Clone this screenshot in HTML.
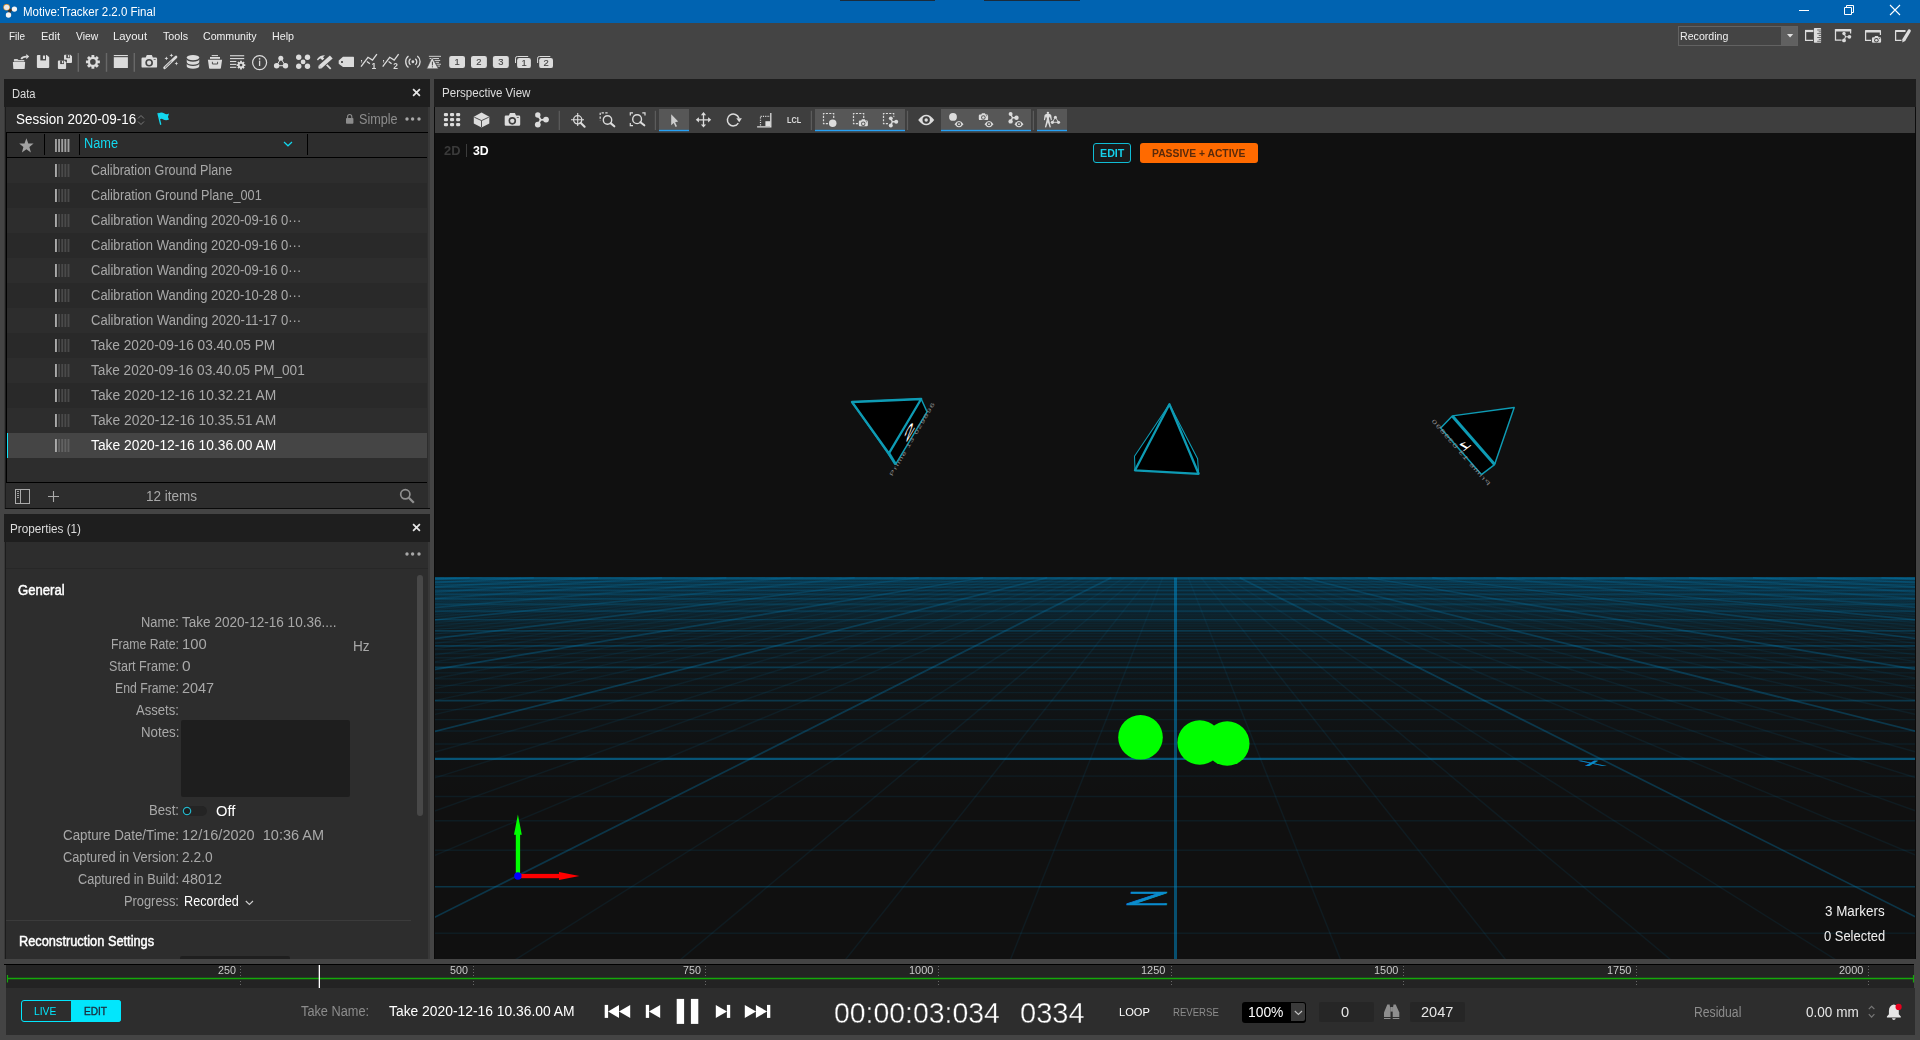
<!DOCTYPE html>
<html><head><meta charset="utf-8"><title>Motive:Tracker 2.2.0 Final</title>
<style>
html,body{margin:0;padding:0;}
body{width:1920px;height:1040px;position:relative;overflow:hidden;background:#444444;font-family:"Liberation Sans", sans-serif;}
svg{position:absolute;overflow:visible;}
.i{fill:#dcdcdc;}
</style></head><body>
<div style="position:absolute;left:0px;top:0px;width:1920px;height:23px;background:#0063b1;"></div>
<div style="position:absolute;left:840px;top:0px;width:95px;height:1px;background:#1b2b3b;"></div>
<div style="position:absolute;left:984px;top:0px;width:96px;height:1px;background:#1b2b3b;"></div>
<div style="position:absolute;left:1678px;top:26px;width:120px;height:20px;background:#444444;box-sizing:border-box;border:1px solid #626262;"></div>
<div style="position:absolute;left:1781px;top:27px;width:16px;height:18px;background:#606060;"></div>
<svg style="left:1786.5px;top:34.3px" width="6.2" height="3.4"><path d="M0 0H6.2L3.1 3.4Z" fill="#e0e0e0"/></svg>
<svg style="left:0;top:0" width="1920" height="48" font-family="Liberation Sans, sans-serif">
<path d="M6.5 7.3L9.9 10.6L14.4 9.1M9.9 10.6L8.5 15" stroke="#333333" stroke-width="2.6" fill="none"/><circle cx="6.6" cy="7.2" r="3.3" fill="#e8962e"/><circle cx="6.7" cy="7.35" r="2.7" fill="#ececec"/><circle cx="14.4" cy="9.1" r="2.7" fill="#f4f4f4"/><circle cx="8.5" cy="15" r="2.7" fill="#f4f4f4"/><rect x="1799" y="10" width="10" height="1" fill="#fff"/><path d="M1844.5 7.5H1851.5V14.5H1844.5ZM1846.5 7.5V5.5H1853.5V12.5H1851.5" fill="none" stroke="#fff" stroke-width="1"/><path d="M1890 5L1900 15M1900 5L1890 15" stroke="#fff" stroke-width="1.1"/><path d="M1813 40.3H1805.6V31" fill="none" stroke="#dcdcdc" stroke-width="1.25"/><rect x="1805" y="29.9" width="8.4" height="2.2" fill="#dcdcdc"/><rect x="1813.9" y="28.1" width="7.2" height="14.7" rx="0.7" fill="#dcdcdc"/><rect x="1817.1999999999998" y="29.60" width="3.9" height="0.75" fill="#444444"/><rect x="1818.6999999999998" y="31.47" width="2.4" height="0.75" fill="#444444"/><rect x="1817.1999999999998" y="33.34" width="3.9" height="0.75" fill="#444444"/><rect x="1818.6999999999998" y="35.21" width="2.4" height="0.75" fill="#444444"/><rect x="1817.1999999999998" y="37.08" width="3.9" height="0.75" fill="#444444"/><rect x="1818.6999999999998" y="38.95" width="2.4" height="0.75" fill="#444444"/><rect x="1817.1999999999998" y="40.82" width="3.9" height="0.75" fill="#444444"/><path d="M1841.6 40H1835.5V30.5M1850.6 30.5V33.4" fill="none" stroke="#dcdcdc" stroke-width="1.25"/><rect x="1834.9" y="29" width="16.35" height="2.4" rx="0.6" fill="#dcdcdc"/><path d="M1844 33.4L1845.6 36.8L1849.4 36.8M1845.6 36.8L1844 40.4" stroke="#dcdcdc" stroke-width="1.1" fill="none"/><circle cx="1844" cy="33.5" r="1.7" fill="#dcdcdc"/><circle cx="1849.4" cy="36.8" r="1.9" fill="#dcdcdc"/><circle cx="1844" cy="40.4" r="1.9" fill="#dcdcdc"/><path d="M1871 40.3H1865.6V31M1880.4 31V35" fill="none" stroke="#dcdcdc" stroke-width="1.25"/><rect x="1865" y="29.9" width="16" height="2.5" rx="0.6" fill="#dcdcdc"/><rect x="1871.1" y="35.1" width="10.8" height="8.4" fill="#444444"/><path d="M1873.1000000000001 37.28H1874.384L1875.028 35.9H1877.972L1878.616 37.28H1879.9Q1881.1000000000001 37.28 1881.1000000000001 38.480000000000004V41.599999999999994Q1881.1000000000001 42.8 1879.9 42.8H1873.1000000000001Q1871.9 42.8 1871.9 41.599999999999994V38.480000000000004Q1871.9 37.28 1873.1000000000001 37.28Z" fill="#dcdcdc"/><circle cx="1876.4080000000001" cy="40.24" r="2.254" fill="#444444"/><circle cx="1876.4080000000001" cy="40.24" r="1.288" fill="#dcdcdc"/><rect x="1879.076" y="38.108000000000004" width="1.196" height="0.7" fill="#444444"/><path d="M1901.5 40.3H1895.6V31" fill="none" stroke="#dcdcdc" stroke-width="1.25"/><rect x="1895" y="29.9" width="10.6" height="2.2" rx="0.6" fill="#dcdcdc"/><path d="M1903.7 40.2L1909.4 30.8" stroke="#444444" stroke-width="5.2"/><path d="M1904 39.6L1909.2 31" stroke="#dcdcdc" stroke-width="3.3" stroke-linecap="round"/><path d="M1902.3 42.4L1902.6 38.8L1905.5 40.5Z" fill="#dcdcdc"/></svg>
<svg style="left:0;top:0;filter:brightness(1)" width="600" height="80" font-family="Liberation Sans, sans-serif">
<rect x="77.6" y="53" width="1.4" height="18.8" fill="#686868"/><rect x="105.8" y="53" width="1.4" height="18.8" fill="#686868"/><rect x="133.60000000000002" y="53" width="1.4" height="18.8" fill="#686868"/><path d="M13.9 61.6V59.6Q13.9 58.9 14.6 58.9H17.4L18.6 59.9H23.8Q24.4 59.9 24.4 60.5V61.6Z" fill="#d0d0d0"/><path d="M12.9 62.1H25.1L24.7 68.4Q24.6 69 24 69H14Q13.4 69 13.3 68.4Z" fill="#dcdcdc"/><path d="M21.2 59Q22.6 56.5 26.8 56.6" fill="none" stroke="#dcdcdc" stroke-width="1.7"/><path d="M26.3 53.9L29.2 56.6L26.3 59.2Z" fill="#dcdcdc"/><path d="M37.9 54.9H46.74L49.2 57.36V67.0Q49.2 68.0 48.2 68.0H37.9Q36.9 68.0 36.9 67.0V55.9Q36.9 54.9 37.9 54.9Z" fill="#dcdcdc"/><rect x="40.34" y="54.80" width="5.66" height="5.63" fill="#444444"/><rect x="42.93" y="55.55" width="2.09" height="3.54" fill="#dcdcdc"/><path d="M65 54.7H70.4L72 56.300000000000004V61.900000000000006Q72 62.900000000000006 71 62.900000000000006H65Q64 62.900000000000006 64 61.900000000000006V55.7Q64 54.7 65 54.7Z" fill="#dcdcdc"/><rect x="66.24" y="54.60" width="3.68" height="3.53" fill="#444444"/><rect x="67.92" y="55.11" width="1.36" height="2.21" fill="#dcdcdc"/><rect x="57.1" y="59.7" width="9.8" height="9.8" fill="#444444"/><path d="M58.9 60.5H64.46L66.1 62.14V68.0Q66.1 69.0 65.1 69.0H58.9Q57.9 69.0 57.9 68.0V61.5Q57.9 60.5 58.9 60.5Z" fill="#dcdcdc"/><rect x="60.20" y="60.40" width="3.77" height="3.65" fill="#444444"/><rect x="61.92" y="60.92" width="1.39" height="2.29" fill="#dcdcdc"/><path d="M99.86 60.51 L99.86 63.29 L97.79 63.36 L97.39 64.32 L98.80 65.84 L96.84 67.80 L95.32 66.39 L94.36 66.79 L94.29 68.86 L91.51 68.86 L91.44 66.79 L90.48 66.39 L88.96 67.80 L87.00 65.84 L88.41 64.32 L88.01 63.36 L85.94 63.29 L85.94 60.51 L88.01 60.44 L88.41 59.48 L87.00 57.96 L88.96 56.00 L90.48 57.41 L91.44 57.01 L91.51 54.94 L94.29 54.94 L94.36 57.01 L95.32 57.41 L96.84 56.00 L98.80 57.96 L97.39 59.48 L97.79 60.44Z" fill="#dcdcdc"/><circle cx="92.9" cy="61.9" r="2.8" fill="#444444"/><rect x="113.8" y="55" width="14.1" height="1.1" fill="#dcdcdc"/><rect x="113.8" y="57.2" width="14.1" height="10.8" fill="#dcdcdc"/><path d="M142.7 57.6H145.712L146.804 55.1H151.796L152.888 57.6H155.9Q157.1 57.6 157.1 58.800000000000004V66.39999999999999Q157.1 67.6 155.9 67.6H142.7Q141.5 67.6 141.5 66.39999999999999V58.800000000000004Q141.5 57.6 142.7 57.6Z" fill="#dcdcdc"/><circle cx="149.144" cy="62.800000000000004" r="3.822" fill="#444444"/><circle cx="149.144" cy="62.800000000000004" r="2.184" fill="#dcdcdc"/><rect x="153.668" y="59.1" width="2.028" height="0.7" fill="#444444"/><path d="M164.6 67.8L176 56.9" stroke="#dcdcdc" stroke-width="2.7" stroke-linecap="round"/><path d="M165 67.5L171.5 61.2" stroke="#444444" stroke-width="0.8"/><path d="M166.4 56.5L166.93200000000002 57.867999999999995L168.3 58.4L166.93200000000002 58.932L166.4 60.3L165.868 58.932L164.5 58.4L165.868 57.867999999999995Z" fill="#dcdcdc"/><path d="M171.4 53.5L171.93200000000002 54.867999999999995L173.3 55.4L171.93200000000002 55.932L171.4 57.3L170.868 55.932L169.5 55.4L170.868 54.867999999999995Z" fill="#dcdcdc"/><path d="M176.4 61.6L176.93200000000002 62.968L178.3 63.5L176.93200000000002 64.032L176.4 65.4L175.868 64.032L174.5 63.5L175.868 62.968Z" fill="#dcdcdc"/><ellipse cx="193" cy="57.6" rx="6.25" ry="2.55" fill="#dcdcdc"/><path d="M186.75 59.3A6.25 2.5 0 0 0 199.25 59.3V62.099999999999994A6.25 2.6 0 0 1 186.75 62.099999999999994Z" fill="#dcdcdc"/><path d="M186.75 63.4A6.25 2.5 0 0 0 199.25 63.4V66.2A6.25 2.6 0 0 1 186.75 66.2Z" fill="#dcdcdc"/><rect x="211.7" y="55.1" width="6.3" height="1" fill="#dcdcdc"/><rect x="210" y="57" width="10" height="1.8" fill="#dcdcdc"/><path d="M207.9 59.7H222.1L220.9 68.1Q220.8 68.8 220.1 68.8H209.9Q209.2 68.8 209.1 68.1Z" fill="#dcdcdc"/><path d="M212.4 61.8V64H217.6V61.8" fill="none" stroke="#444444" stroke-width="0.9"/><rect x="230" y="55.2" width="14.2" height="1.1" fill="#dcdcdc"/><rect x="230" y="58.050000000000004" width="14.2" height="1.1" fill="#dcdcdc"/><rect x="230" y="60.95" width="6.3" height="1.1" fill="#dcdcdc"/><rect x="230" y="63.85000000000001" width="6.3" height="1.1" fill="#dcdcdc"/><rect x="230" y="66.75" width="6.3" height="1.1" fill="#dcdcdc"/><path d="M245.32 64.24 L245.32 65.96 L244.16 66.05 L243.90 66.67 L244.66 67.54 L243.44 68.76 L242.57 68.00 L241.95 68.26 L241.86 69.42 L240.14 69.42 L240.05 68.26 L239.43 68.00 L238.56 68.76 L237.34 67.54 L238.10 66.67 L237.84 66.05 L236.68 65.96 L236.68 64.24 L237.84 64.15 L238.10 63.53 L237.34 62.66 L238.56 61.44 L239.43 62.20 L240.05 61.94 L240.14 60.78 L241.86 60.78 L241.95 61.94 L242.57 62.20 L243.44 61.44 L244.66 62.66 L243.90 63.53 L244.16 64.15Z" fill="#dcdcdc"/><circle cx="241" cy="65.1" r="1.4" fill="#444444"/><circle cx="259.6" cy="62.6" r="7" fill="none" stroke="#dcdcdc" stroke-width="1.2"/><rect x="258.95" y="60.6" width="1.3" height="5.4" fill="#dcdcdc"/><circle cx="259.6" cy="58.8" r="0.85" fill="#dcdcdc"/><path d="M280.8 58.4L276.7 65.7H285.4Z" fill="none" stroke="#dcdcdc" stroke-width="1"/><circle cx="280.8" cy="58.3" r="2.5" fill="#dcdcdc"/><circle cx="276.6" cy="65.7" r="2.7" fill="#dcdcdc"/><circle cx="285.5" cy="65.7" r="2.7" fill="#dcdcdc"/><circle cx="298.75" cy="57.3" r="2.7" fill="#dcdcdc"/><circle cx="307.5" cy="57.3" r="2.7" fill="#dcdcdc"/><circle cx="298.75" cy="66.3" r="2.7" fill="#dcdcdc"/><circle cx="307.5" cy="66.3" r="2.7" fill="#dcdcdc"/><circle cx="303.1" cy="61.9" r="2.4" fill="#dcdcdc"/><path d="M326.3 64.3L330.7 68.8" stroke="#dcdcdc" stroke-width="1.7"/><path d="M316.9 59.5Q319.3 55.3 325 55.2L323 57.3L324.3 58.5L322.3 60.2L320.6 58.6Q319 58.8 318 60.4Z" fill="#dcdcdc"/><path d="M319.6 67.4L331 57.2" stroke="#444444" stroke-width="5.6"/><path d="M320.3 66.8L331.3 57" stroke="#dcdcdc" stroke-width="4.1"/><path d="M318 68.9L318.7 65.3L321.9 68.2Z" fill="#dcdcdc"/><path d="M318 68.9L318.3 67.5L319.4 68.6Z" fill="#444444"/><path d="M353.4 56.7H343L339 60.2Q338.7 60.5 338.7 61V63.2Q338.7 63.7 339 64L343 67.1H353.4Q354 67.1 354 66.5V57.3Q354 56.7 353.4 56.7Z" fill="#dcdcdc"/><circle cx="342" cy="62" r="0.95" fill="#222"/><path d="M361 66.7L368 57.3L372.5 60.1L376.9 54.2" fill="none" stroke="#dcdcdc" stroke-width="1.3"/><path d="M366.9 61.5L369.9 63.8" stroke="#dcdcdc" stroke-width="1.2"/><rect x="361" y="60" width="1.1" height="1" fill="#dcdcdc"/><rect x="361" y="61.4" width="1.1" height="1" fill="#dcdcdc"/><text x="373.9" y="69" font-size="8.4" font-weight="700" text-anchor="middle" fill="#dcdcdc">1</text><path d="M382.7 66.7L389.7 57.3L394.2 60.1L398.59999999999997 54.2" fill="none" stroke="#dcdcdc" stroke-width="1.3"/><path d="M388.59999999999997 61.5L391.59999999999997 63.8" stroke="#dcdcdc" stroke-width="1.2"/><rect x="383" y="60" width="1.1" height="1" fill="#dcdcdc"/><rect x="383" y="61.4" width="1.1" height="1" fill="#dcdcdc"/><text x="395.59999999999997" y="69" font-size="8.4" font-weight="700" text-anchor="middle" fill="#dcdcdc">2</text><circle cx="412.9" cy="61.75" r="1.4" fill="#dcdcdc"/><path d="M415.30 58.68A3.9 3.9 0 0 1 415.30 64.82" fill="none" stroke="#dcdcdc" stroke-width="1.3"/><path d="M410.50 58.68A3.9 3.9 0 0 0 410.50 64.82" fill="none" stroke="#dcdcdc" stroke-width="1.3"/><path d="M417.33 56.08A7.2 7.2 0 0 1 417.33 67.42" fill="none" stroke="#dcdcdc" stroke-width="1.3"/><path d="M408.47 56.08A7.2 7.2 0 0 0 408.47 67.42" fill="none" stroke="#dcdcdc" stroke-width="1.3"/><rect x="428.9" y="55.849999999999994" width="12.100000000000023" height="0.9" fill="#dcdcdc"/><rect x="429.6" y="58.05" width="9.399999999999977" height="0.9" fill="#dcdcdc"/><rect x="434.5" y="59.949999999999996" width="5.699999999999989" height="0.9" fill="#dcdcdc"/><rect x="435.5" y="61.849999999999994" width="3.5" height="0.9" fill="#dcdcdc"/><rect x="436.5" y="63.75" width="4.5" height="0.9" fill="#dcdcdc"/><rect x="437.5" y="65.64999999999999" width="2.5" height="0.9" fill="#dcdcdc"/><path d="M432.1 57.4L438.4 68.8H426.7Z" fill="#dcdcdc" stroke="#444444" stroke-width="0.6"/><rect x="431.9" y="61.6" width="1" height="3.8" fill="#444444"/><rect x="431.9" y="66.3" width="1" height="1" fill="#444444"/><rect x="449.2" y="55.9" width="15.8" height="12.1" rx="2.2" fill="#dcdcdc"/><text x="457.09999999999997" y="65.35" font-size="9.4" text-anchor="middle" fill="#454545" stroke="#454545" stroke-width="0.15">1</text><rect x="471" y="55.9" width="15.9" height="12.1" rx="2.2" fill="#dcdcdc"/><text x="478.95" y="65.35" font-size="9.4" text-anchor="middle" fill="#454545" stroke="#454545" stroke-width="0.15">2</text><rect x="492.9" y="55.9" width="15.9" height="12.1" rx="2.2" fill="#dcdcdc"/><text x="500.84999999999997" y="65.35" font-size="9.4" text-anchor="middle" fill="#454545" stroke="#454545" stroke-width="0.15">3</text><path d="M515.5 63V58.2Q515.5 56.5 517.4 56.5H528.2" fill="none" stroke="#dcdcdc" stroke-width="1"/><rect x="517.1" y="58" width="13.8" height="10.1" rx="2.2" fill="#dcdcdc"/><text x="524.0" y="66.45" font-size="9.4" text-anchor="middle" fill="#454545" stroke="#454545" stroke-width="0.15">1</text><path d="M537.6 63V58.2Q537.6 56.5 539.5 56.5H550.3000000000001" fill="none" stroke="#dcdcdc" stroke-width="1"/><rect x="539.2" y="58" width="13.8" height="10.1" rx="2.2" fill="#dcdcdc"/><text x="546.1" y="66.45" font-size="9.4" text-anchor="middle" fill="#454545" stroke="#454545" stroke-width="0.15">2</text></svg>
<div style="position:absolute;left:4px;top:79px;width:426px;height:27.5px;background:#1e1e1e;"></div>
<svg style="left:412.0px;top:88.0px" width="9" height="9"><path d="M1.1 1.1L7.9 7.9M7.9 1.1L1.1 7.9" stroke="#e6e6e6" stroke-width="1.7"/></svg>
<div style="position:absolute;left:4px;top:106.5px;width:426px;height:402px;background:#383838;"></div>
<div style="position:absolute;left:5px;top:106.5px;width:1px;height:402px;background:#1c1c1c;"></div>
<div style="position:absolute;left:6px;top:106.5px;width:422px;height:402px;background:#2d2d2d;"></div>
<svg style="left:137px;top:114px" width="8" height="12"><path d="M1 4.5L4 1.5L7 4.5M1 7.5L4 10.5L7 7.5" fill="none" stroke="#7a7a7a" stroke-width="1"/></svg>
<svg style="left:155px;top:111px" width="16" height="16"><path d="M2.3 2.2L3.6 1.8L6.4 13.6L5.1 13.9Z" fill="#12d7ee"/><path d="M3.2 2.6Q6.5 0.6 9 2.3Q11.3 3.8 14 2.6Q12.2 5.6 14 8.6Q10.6 9.8 8.3 8.4Q6.2 7.2 4.7 8.6Z" fill="#12d7ee"/></svg>
<svg style="left:345px;top:113px" width="10" height="12"><rect x="1" y="5" width="7.4" height="5.8" rx="0.8" fill="#8c8c8c"/><path d="M2.6 5.4V3.6A2.1 2.1 0 0 1 6.8 3.6V5.4" fill="none" stroke="#8c8c8c" stroke-width="1.1"/></svg>
<svg style="left:404.5px;top:116.5px" width="16" height="4"><circle cx="2" cy="2" r="1.7" fill="#a8a8a8"/><circle cx="7.6" cy="2" r="1.7" fill="#a8a8a8"/><circle cx="14" cy="2" r="1.7" fill="#a8a8a8"/></svg>
<div style="position:absolute;left:6px;top:132px;width:421px;height:351px;background:#000000;"></div>
<div style="position:absolute;left:7px;top:133px;width:421px;height:24px;background:#2d2d2d;"></div>
<div style="position:absolute;left:427px;top:132px;width:1px;height:1px;background:#000;"></div>
<div style="position:absolute;left:44px;top:134px;width:1.2px;height:21px;background:#000;"></div>
<div style="position:absolute;left:79px;top:134px;width:1.2px;height:21px;background:#000;"></div>
<div style="position:absolute;left:306.5px;top:134px;width:1.2px;height:21px;background:#000;"></div>
<svg style="left:19px;top:138.3px" width="15" height="15"><path d="M7.4 0.2L9.3 5.5L14.6 5.6L10.4 9L11.9 14.4L7.4 11.3L2.9 14.4L4.4 9L0.2 5.6L5.5 5.5Z" fill="#a2a2a2"/></svg>
<svg style="left:54.9px;top:139.1px" width="15" height="13"><rect x="0.00" y="0" width="1.9" height="13" fill="#a0a0a0"/><rect x="3.13" y="0" width="1.9" height="13" fill="#a0a0a0"/><rect x="6.26" y="0" width="1.9" height="13" fill="#a0a0a0"/><rect x="9.39" y="0" width="1.9" height="13" fill="#a0a0a0"/><rect x="12.52" y="0" width="1.9" height="13" fill="#a0a0a0"/></svg>
<svg style="left:283px;top:141px" width="10" height="6"><path d="M1 1L5 4.8L9 1" fill="none" stroke="#12d7ee" stroke-width="1.2"/></svg>
<div style="position:absolute;left:7px;top:158px;width:420px;height:25px;background:#2d2d2d;"></div>
<svg style="left:54.9px;top:164px" width="15" height="13"><rect x="0.00" y="0" width="1.9" height="13" fill="#aaaaaa"/><rect x="3.13" y="0" width="1.9" height="13" fill="#4a4a4a"/><rect x="6.26" y="0" width="1.9" height="13" fill="#4a4a4a"/><rect x="9.39" y="0" width="1.9" height="13" fill="#4a4a4a"/><rect x="12.52" y="0" width="1.9" height="13" fill="#4a4a4a"/></svg>
<div style="position:absolute;left:7px;top:183px;width:420px;height:25px;background:#292929;"></div>
<svg style="left:54.9px;top:189px" width="15" height="13"><rect x="0.00" y="0" width="1.9" height="13" fill="#aaaaaa"/><rect x="3.13" y="0" width="1.9" height="13" fill="#4a4a4a"/><rect x="6.26" y="0" width="1.9" height="13" fill="#4a4a4a"/><rect x="9.39" y="0" width="1.9" height="13" fill="#4a4a4a"/><rect x="12.52" y="0" width="1.9" height="13" fill="#4a4a4a"/></svg>
<div style="position:absolute;left:7px;top:208px;width:420px;height:25px;background:#2d2d2d;"></div>
<svg style="left:54.9px;top:214px" width="15" height="13"><rect x="0.00" y="0" width="1.9" height="13" fill="#aaaaaa"/><rect x="3.13" y="0" width="1.9" height="13" fill="#4a4a4a"/><rect x="6.26" y="0" width="1.9" height="13" fill="#4a4a4a"/><rect x="9.39" y="0" width="1.9" height="13" fill="#4a4a4a"/><rect x="12.52" y="0" width="1.9" height="13" fill="#4a4a4a"/></svg>
<div style="position:absolute;left:7px;top:233px;width:420px;height:25px;background:#292929;"></div>
<svg style="left:54.9px;top:239px" width="15" height="13"><rect x="0.00" y="0" width="1.9" height="13" fill="#aaaaaa"/><rect x="3.13" y="0" width="1.9" height="13" fill="#4a4a4a"/><rect x="6.26" y="0" width="1.9" height="13" fill="#4a4a4a"/><rect x="9.39" y="0" width="1.9" height="13" fill="#4a4a4a"/><rect x="12.52" y="0" width="1.9" height="13" fill="#4a4a4a"/></svg>
<div style="position:absolute;left:7px;top:258px;width:420px;height:25px;background:#2d2d2d;"></div>
<svg style="left:54.9px;top:264px" width="15" height="13"><rect x="0.00" y="0" width="1.9" height="13" fill="#aaaaaa"/><rect x="3.13" y="0" width="1.9" height="13" fill="#4a4a4a"/><rect x="6.26" y="0" width="1.9" height="13" fill="#4a4a4a"/><rect x="9.39" y="0" width="1.9" height="13" fill="#4a4a4a"/><rect x="12.52" y="0" width="1.9" height="13" fill="#4a4a4a"/></svg>
<div style="position:absolute;left:7px;top:283px;width:420px;height:25px;background:#292929;"></div>
<svg style="left:54.9px;top:289px" width="15" height="13"><rect x="0.00" y="0" width="1.9" height="13" fill="#aaaaaa"/><rect x="3.13" y="0" width="1.9" height="13" fill="#4a4a4a"/><rect x="6.26" y="0" width="1.9" height="13" fill="#4a4a4a"/><rect x="9.39" y="0" width="1.9" height="13" fill="#4a4a4a"/><rect x="12.52" y="0" width="1.9" height="13" fill="#4a4a4a"/></svg>
<div style="position:absolute;left:7px;top:308px;width:420px;height:25px;background:#2d2d2d;"></div>
<svg style="left:54.9px;top:314px" width="15" height="13"><rect x="0.00" y="0" width="1.9" height="13" fill="#aaaaaa"/><rect x="3.13" y="0" width="1.9" height="13" fill="#4a4a4a"/><rect x="6.26" y="0" width="1.9" height="13" fill="#4a4a4a"/><rect x="9.39" y="0" width="1.9" height="13" fill="#4a4a4a"/><rect x="12.52" y="0" width="1.9" height="13" fill="#4a4a4a"/></svg>
<div style="position:absolute;left:7px;top:333px;width:420px;height:25px;background:#292929;"></div>
<svg style="left:54.9px;top:339px" width="15" height="13"><rect x="0.00" y="0" width="1.9" height="13" fill="#aaaaaa"/><rect x="3.13" y="0" width="1.9" height="13" fill="#4a4a4a"/><rect x="6.26" y="0" width="1.9" height="13" fill="#4a4a4a"/><rect x="9.39" y="0" width="1.9" height="13" fill="#4a4a4a"/><rect x="12.52" y="0" width="1.9" height="13" fill="#4a4a4a"/></svg>
<div style="position:absolute;left:7px;top:358px;width:420px;height:25px;background:#2d2d2d;"></div>
<svg style="left:54.9px;top:364px" width="15" height="13"><rect x="0.00" y="0" width="1.9" height="13" fill="#aaaaaa"/><rect x="3.13" y="0" width="1.9" height="13" fill="#4a4a4a"/><rect x="6.26" y="0" width="1.9" height="13" fill="#4a4a4a"/><rect x="9.39" y="0" width="1.9" height="13" fill="#4a4a4a"/><rect x="12.52" y="0" width="1.9" height="13" fill="#4a4a4a"/></svg>
<div style="position:absolute;left:7px;top:383px;width:420px;height:25px;background:#292929;"></div>
<svg style="left:54.9px;top:389px" width="15" height="13"><rect x="0.00" y="0" width="1.9" height="13" fill="#aaaaaa"/><rect x="3.13" y="0" width="1.9" height="13" fill="#4a4a4a"/><rect x="6.26" y="0" width="1.9" height="13" fill="#4a4a4a"/><rect x="9.39" y="0" width="1.9" height="13" fill="#4a4a4a"/><rect x="12.52" y="0" width="1.9" height="13" fill="#4a4a4a"/></svg>
<div style="position:absolute;left:7px;top:408px;width:420px;height:25px;background:#2d2d2d;"></div>
<svg style="left:54.9px;top:414px" width="15" height="13"><rect x="0.00" y="0" width="1.9" height="13" fill="#aaaaaa"/><rect x="3.13" y="0" width="1.9" height="13" fill="#4a4a4a"/><rect x="6.26" y="0" width="1.9" height="13" fill="#4a4a4a"/><rect x="9.39" y="0" width="1.9" height="13" fill="#4a4a4a"/><rect x="12.52" y="0" width="1.9" height="13" fill="#4a4a4a"/></svg>
<div style="position:absolute;left:7px;top:433px;width:420px;height:25px;background:#454545;"></div>
<div style="position:absolute;left:7px;top:433px;width:1.3px;height:24.5px;background:#12e4fa;"></div>
<svg style="left:54.9px;top:439px" width="15" height="13"><rect x="0.00" y="0" width="1.9" height="13" fill="#aaaaaa"/><rect x="3.13" y="0" width="1.9" height="13" fill="#626262"/><rect x="6.26" y="0" width="1.9" height="13" fill="#626262"/><rect x="9.39" y="0" width="1.9" height="13" fill="#626262"/><rect x="12.52" y="0" width="1.9" height="13" fill="#626262"/></svg>
<div style="position:absolute;left:7px;top:458px;width:420px;height:24px;background:#2d2d2d;"></div>
<div style="position:absolute;left:6px;top:483px;width:422px;height:25px;background:#2d2d2d;"></div>
<div style="position:absolute;left:5px;top:508px;width:425px;height:1px;background:#0a0a0a;"></div>
<svg style="left:15px;top:489px" width="16" height="15"><rect x="0.5" y="0.5" width="14" height="14" fill="none" stroke="#aaaaaa" stroke-width="1"/><path d="M5.5 0.5V14.5" stroke="#aaaaaa" stroke-width="1"/><path d="M2 2.5H4M2 4.5H4M2 6.5H4M2 8.5H4" stroke="#aaaaaa" stroke-width="0.9"/></svg>
<svg style="left:48px;top:491px" width="11" height="11"><path d="M5.5 0V11M0 5.5H11" stroke="#aaaaaa" stroke-width="1.1"/></svg>
<svg style="left:399px;top:488px" width="17" height="17"><circle cx="6.3" cy="6.3" r="4.6" fill="none" stroke="#909090" stroke-width="1.7"/><path d="M9.8 9.8L14.8 14.8" stroke="#909090" stroke-width="2.3"/></svg>
<div style="position:absolute;left:4px;top:514px;width:426px;height:27.5px;background:#1e1e1e;"></div>
<svg style="left:412.0px;top:523.0px" width="9" height="9"><path d="M1.1 1.1L7.9 7.9M7.9 1.1L1.1 7.9" stroke="#e6e6e6" stroke-width="1.7"/></svg>
<div style="position:absolute;left:4px;top:541.5px;width:426px;height:417.5px;background:#383838;"></div>
<div style="position:absolute;left:5px;top:541.5px;width:1px;height:417.5px;background:#1c1c1c;"></div>
<div style="position:absolute;left:6px;top:541.5px;width:422px;height:417.5px;background:#2d2d2d;"></div>
<svg style="left:404.5px;top:551.5px" width="16" height="4"><circle cx="2" cy="2" r="1.7" fill="#a8a8a8"/><circle cx="7.6" cy="2" r="1.7" fill="#a8a8a8"/><circle cx="14" cy="2" r="1.7" fill="#a8a8a8"/></svg>
<div style="position:absolute;left:6px;top:568px;width:422px;height:1px;background:#272727;"></div>
<div style="position:absolute;left:416.5px;top:575px;width:6.5px;height:241px;background:#484848;border-radius:3px;"></div>
<div style="position:absolute;left:180.5px;top:720px;width:169px;height:77px;background:#1e1e1e;border-radius:2px;"></div>
<div style="position:absolute;left:182px;top:806px;width:25px;height:10px;background:#242424;border-radius:5px;"></div>
<svg style="left:182px;top:806px" width="10" height="10"><circle cx="5" cy="5" r="3.7" fill="#1e1e1e" stroke="#25b4c8" stroke-width="1.2"/></svg>
<svg style="left:244.5px;top:899.5px" width="9" height="6"><path d="M0.8 1L4.4 4.4L8 1" fill="none" stroke="#d0d0d0" stroke-width="1.1"/></svg>
<div style="position:absolute;left:6px;top:920px;width:405px;height:1px;background:#3b3b3b;"></div>
<div style="position:absolute;left:180px;top:955.5px;width:110px;height:3.5px;background:#1e1e1e;border-radius:2px 2px 0 0;"></div>
<div style="position:absolute;left:434px;top:79px;width:1482px;height:28px;background:#1e1e1e;"></div>
<div style="position:absolute;left:434px;top:107px;width:1482px;height:26px;background:#0c0c0c;"></div>
<div style="position:absolute;left:435px;top:107px;width:1480px;height:26px;background:#3e3e3e;"></div>
<svg style="left:0;top:0;filter:brightness(1)" width="1920" height="134" font-family="Liberation Sans, sans-serif">
<rect x="659" y="109" width="30" height="20.8" fill="#575757"/><rect x="659" y="129.8" width="30" height="1.4" fill="#26a2f6"/><rect x="815" y="109" width="90" height="20.8" fill="#575757"/><rect x="815" y="129.8" width="90" height="1.4" fill="#26a2f6"/><rect x="941" y="109" width="90" height="20.8" fill="#575757"/><rect x="941" y="129.8" width="90" height="1.4" fill="#26a2f6"/><rect x="1037" y="109" width="30" height="20.8" fill="#575757"/><rect x="1037" y="129.8" width="30" height="1.4" fill="#26a2f6"/><rect x="558.6999999999999" y="110.8" width="1.2" height="19.2" fill="#5c5c5c"/><rect x="654.8" y="110.8" width="1.2" height="19.2" fill="#5c5c5c"/><rect x="810.8" y="110.8" width="1.2" height="19.2" fill="#5c5c5c"/><rect x="906.9" y="110.8" width="1.2" height="19.2" fill="#5c5c5c"/><rect x="1032.8000000000002" y="110.8" width="1.2" height="19.2" fill="#5c5c5c"/><rect x="443.9" y="112.9" width="4.1" height="3.4" rx="1.2" fill="#dcdcdc"/><rect x="443.9" y="117.9" width="4.1" height="3.4" rx="1.2" fill="#dcdcdc"/><rect x="443.9" y="122.9" width="4.1" height="3.4" rx="1.2" fill="#dcdcdc"/><rect x="450" y="112.9" width="4.1" height="3.4" rx="1.2" fill="#dcdcdc"/><rect x="450" y="117.9" width="4.1" height="3.4" rx="1.2" fill="#dcdcdc"/><rect x="450" y="122.9" width="4.1" height="3.4" rx="1.2" fill="#dcdcdc"/><rect x="456.1" y="112.9" width="4.1" height="3.4" rx="1.2" fill="#dcdcdc"/><rect x="456.1" y="117.9" width="4.1" height="3.4" rx="1.2" fill="#dcdcdc"/><rect x="456.1" y="122.9" width="4.1" height="3.4" rx="1.2" fill="#dcdcdc"/><path d="M481.5 112.4L489.3 116.7V123.4L481.5 127.6L473.8 123.4V116.7Z" fill="#dcdcdc"/><path d="M474.3 117.2L481.5 120.6L488.8 117.2M481.5 120.6V127.2" fill="none" stroke="#3e3e3e" stroke-width="0.9"/><path d="M505.9 115.48H508.885L509.96999999999997 112.9H514.93L516.015 115.48H519.0Q520.2 115.48 520.2 116.68V124.60000000000001Q520.2 125.80000000000001 519.0 125.80000000000001H505.9Q504.7 125.80000000000001 504.7 124.60000000000001V116.68Q504.7 115.48 505.9 115.48Z" fill="#dcdcdc"/><circle cx="512.295" cy="120.84" r="3.7975" fill="#3e3e3e"/><circle cx="512.295" cy="120.84" r="2.1700000000000004" fill="#dcdcdc"/><rect x="516.79" y="117.028" width="2.015" height="0.7" fill="#3e3e3e"/><path d="M537.8 115L540.7 119.8L546 119.6M540.7 119.8L537.8 124.6" stroke="#dcdcdc" stroke-width="1.8" fill="none"/><circle cx="537.8" cy="115" r="2.7" fill="#dcdcdc"/><circle cx="546" cy="119.6" r="2.9" fill="#dcdcdc"/><circle cx="537.8" cy="124.6" r="2.9" fill="#dcdcdc"/><circle cx="577.7" cy="119.8" r="4.1" fill="none" stroke="#dcdcdc" stroke-width="1.3"/><path d="M577.7 112.9V125.9M571 119.8H584" stroke="#dcdcdc" stroke-width="1.1"/><path d="M580.6 122.8L584.6 126.7" stroke="#dcdcdc" stroke-width="2.1" stroke-linecap="round"/><path d="M607.6 112.8H600.2V120.4" fill="none" stroke="#dcdcdc" stroke-width="1.2" stroke-dasharray="2.3 1.4"/><circle cx="607.5" cy="120" r="4.2" fill="#3e3e3e" stroke="#dcdcdc" stroke-width="1.4"/><path d="M610.6 123.1L614.3 126.3" stroke="#dcdcdc" stroke-width="2.1" stroke-linecap="round"/><path d="M630.3 115.4V112.9H633M642.3 112.9H645V115.4M630.3 123V125.6H633" fill="none" stroke="#dcdcdc" stroke-width="1.2"/><circle cx="637.1" cy="119.2" r="4.4" fill="none" stroke="#dcdcdc" stroke-width="1.4"/><path d="M640.4 122.2L644.3 125.3" stroke="#dcdcdc" stroke-width="2.1" stroke-linecap="round"/><path d="M671.2 114.3V125.2L673.7 122.9L675.6 127L677 126.3L675.1 122.3L678.2 121.6Z" fill="#cdcdcd"/><path d="M703.5 113.8V125.8M697.5 119.8H709.5" stroke="#dcdcdc" stroke-width="1.3"/><path d="M703.5 112.1L706.1 115.2H700.9ZM703.5 127.5L706.1 124.39999999999999H700.9ZM695.8 119.8L698.9 117.2V122.39999999999999ZM711.2 119.8L708.1 117.2V122.39999999999999Z" fill="#dcdcdc"/><path d="M738.30 123.13A5.9 5.9 0 1 1 738.91 118.18" fill="none" stroke="#dcdcdc" stroke-width="1.5"/><path d="M736.3 118.3H741.9L739.2 122.2Z" fill="#dcdcdc"/><path d="M757.1 126.8H770.8V112.9" fill="none" stroke="#dcdcdc" stroke-width="1.3"/><rect x="765.4" y="121.2" width="5" height="5" fill="#dcdcdc"/><path d="M760.5 125.4V116.3H770" fill="none" stroke="#dcdcdc" stroke-width="1.2" stroke-dasharray="1.15 1.15"/><text x="787" y="123.3" font-size="9.8" font-weight="700" fill="#dcdcdc" textLength="14.2" lengthAdjust="spacingAndGlyphs">LCL</text><rect x="823.5" y="113.5" width="10.200000000000001" height="10.200000000000001" fill="none" stroke="#dcdcdc" stroke-width="1.2" stroke-dasharray="2.108 1.292" stroke-dashoffset="1.054"/><circle cx="832.7" cy="123.3" r="4.6" fill="#575757"/><circle cx="832.7" cy="123.3" r="3.75" fill="#dcdcdc"/><rect x="853.5" y="113.5" width="10.200000000000001" height="10.200000000000001" fill="none" stroke="#dcdcdc" stroke-width="1.2" stroke-dasharray="2.108 1.292" stroke-dashoffset="1.054"/><rect x="858" y="118.4" width="10.6" height="8.6" fill="#575757"/><path d="M860.0 120.62H861.257L861.894 119.2H864.8059999999999L865.443 120.62H866.6999999999999Q867.9 120.62 867.9 121.82000000000001V125.1Q867.9 126.3 866.6999999999999 126.3H860.0Q858.8 126.3 858.8 125.1V121.82000000000001Q858.8 120.62 860.0 120.62Z" fill="#dcdcdc"/><circle cx="863.2589999999999" cy="123.66000000000001" r="2.2295" fill="#575757"/><circle cx="863.2589999999999" cy="123.66000000000001" r="1.274" fill="#dcdcdc"/><rect x="865.8979999999999" y="121.47200000000001" width="1.183" height="0.7" fill="#575757"/><rect x="883.5" y="113.5" width="10.200000000000001" height="10.200000000000001" fill="none" stroke="#dcdcdc" stroke-width="1.2" stroke-dasharray="2.108 1.292" stroke-dashoffset="1.054"/><path d="M888.2 122.5L889 116.3L893 116.6L899 119V127.6H888.2Z" fill="#575757"/><path d="M890.8 118.3L892.3 121.7L896.2 121.7M892.3 121.7L890.8 125.4" stroke="#dcdcdc" stroke-width="1.4" fill="none"/><circle cx="890.8" cy="118.3" r="1.9" fill="#dcdcdc"/><circle cx="896.2" cy="121.7" r="2.0" fill="#dcdcdc"/><circle cx="890.8" cy="125.4" r="2.0" fill="#dcdcdc"/><path d="M918.2 120Q926.2 109.4 934.2 120Q926.2 130.6 918.2 120Z" fill="#dcdcdc"/><circle cx="926.2" cy="120" r="3.7" fill="#3e3e3e"/><circle cx="926.2" cy="120" r="1.7" fill="#dcdcdc"/><circle cx="953" cy="116.9" r="3.9" fill="#dcdcdc"/><path d="M954.5 124.2Q959 118.0 963.5 124.2Q959 130.4 954.5 124.2Z" fill="#dcdcdc"/><circle cx="959" cy="124.2" r="2.1" fill="#575757"/><circle cx="959" cy="124.2" r="0.9" fill="#dcdcdc"/><path d="M980.0 114.58H981.3109999999999L981.962 113.2H984.938L985.5889999999999 114.58H986.8999999999999Q988.0999999999999 114.58 988.0999999999999 115.78V118.9Q988.0999999999999 120.10000000000001 986.8999999999999 120.10000000000001H980.0Q978.8 120.10000000000001 978.8 118.9V115.78Q978.8 114.58 980.0 114.58Z" fill="#dcdcdc"/><circle cx="983.357" cy="117.54" r="2.2785" fill="#575757"/><circle cx="983.357" cy="117.54" r="1.3020000000000003" fill="#dcdcdc"/><rect x="986.054" y="115.408" width="1.209" height="0.7" fill="#575757"/><path d="M984.5 124.2Q989 118.0 993.5 124.2Q989 130.4 984.5 124.2Z" fill="#dcdcdc"/><circle cx="989" cy="124.2" r="2.1" fill="#575757"/><circle cx="989" cy="124.2" r="0.9" fill="#dcdcdc"/><path d="M1010.6 113.9L1012.5 117.7L1016.5 117.7M1012.5 117.7L1010.6 121.4" stroke="#dcdcdc" stroke-width="1.4" fill="none"/><circle cx="1010.6" cy="113.9" r="2.0" fill="#dcdcdc"/><circle cx="1016.5" cy="117.7" r="2.2" fill="#dcdcdc"/><circle cx="1010.6" cy="121.4" r="2.2" fill="#dcdcdc"/><path d="M1014.5 124.2Q1019 118.0 1023.5 124.2Q1019 130.4 1014.5 124.2Z" fill="#dcdcdc"/><circle cx="1019" cy="124.2" r="2.1" fill="#575757"/><circle cx="1019" cy="124.2" r="0.9" fill="#dcdcdc"/><ellipse cx="1047.9" cy="112.8" rx="1.2" ry="1.15" fill="#dcdcdc"/><path d="M1047.3 113.6L1045.2 114.5Q1044.6 114.8 1044.5 115.6L1043.9 119.9L1044.9 120.3L1046 116.6L1046.9 118.6L1046.3 121.2L1044.9 127.2L1046.1 127.4L1047.9 122.2L1049.7 127.4L1050.9 127.2L1049.5 121.2L1048.9 118.6L1049.8 116.6L1050.9 120.3L1051.9 119.9L1051.3 115.6Q1051.2 114.8 1050.6 114.5L1048.5 113.6Z" fill="#dcdcdc"/><path d="M1055.4 117.2L1052.4 122.3H1058.5Z" fill="none" stroke="#dcdcdc" stroke-width="0.9"/><circle cx="1055.4" cy="117.2" r="1.5" fill="#dcdcdc"/><circle cx="1052.4" cy="122.3" r="1.6" fill="#dcdcdc"/><circle cx="1058.5" cy="122.3" r="1.6" fill="#dcdcdc"/></svg>
<div style="position:absolute;left:434px;top:133px;width:1482px;height:826px;background:#101010;overflow:hidden;">
<svg style="left:-434px;top:-133px" width="1920" height="1040" viewBox="0 0 1920 1040" font-family="Liberation Sans, sans-serif">
<defs><linearGradient id="gmin" gradientUnits="userSpaceOnUse" x1="0" y1="577" x2="0" y2="667"><stop offset="0" stop-color="rgba(0,138,200,0.065)"/><stop offset="1" stop-color="rgba(0,138,200,0.090)"/></linearGradient><linearGradient id="gmaj" gradientUnits="userSpaceOnUse" x1="0" y1="577" x2="0" y2="667"><stop offset="0" stop-color="rgba(0,138,200,0.216)"/><stop offset="1" stop-color="rgba(0,138,200,0.300)"/></linearGradient><linearGradient id="haze" gradientUnits="userSpaceOnUse" x1="0" y1="577" x2="0" y2="800"><stop offset="0" stop-color="rgba(0,138,200,0.09)"/><stop offset="0.1" stop-color="rgba(0,138,200,0.12)"/><stop offset="0.28" stop-color="rgba(0,138,200,0.07)"/><stop offset="0.55" stop-color="rgba(0,138,200,0.03)"/><stop offset="1" stop-color="rgba(0,138,200,0)"/></linearGradient></defs>
<rect x="434" y="577.74" width="1482" height="222.26" fill="url(#haze)"/>
<path d="M429.0 577.74H1921.0" stroke="rgba(0,138,200,0.217)" stroke-width="1.7" fill="none"/>
<path d="M429.0 578.10H1921.0M429.0 578.48H1921.0" stroke="rgba(0,138,200,0.072)" stroke-width="1.4" fill="none"/>
<path d="M429.0 578.87H1921.0M429.0 579.26H1921.0M429.0 580.08H1921.0M429.0 580.51H1921.0M429.0 580.94H1921.0M429.0 581.39H1921.0" stroke="rgba(0,138,200,0.073)" stroke-width="1.4" fill="none"/>
<path d="M429.0 579.67H1921.0" stroke="rgba(0,138,200,0.218)" stroke-width="1.7" fill="none"/>
<path d="M429.0 581.85H1921.0" stroke="rgba(0,138,200,0.221)" stroke-width="1.7" fill="none"/>
<path d="M429.0 582.32H1921.0M429.0 582.80H1921.0M429.0 583.29H1921.0M429.0 583.80H1921.0M429.0 584.86H1921.0" stroke="rgba(0,138,200,0.074)" stroke-width="1.4" fill="none"/>
<path d="M429.0 584.32H1921.0" stroke="rgba(0,138,200,0.223)" stroke-width="1.7" fill="none"/>
<path d="M429.0 585.41H1921.0M429.0 585.98H1921.0M429.0 586.56H1921.0M429.0 587.78H1921.0" stroke="rgba(0,138,200,0.075)" stroke-width="1.4" fill="none"/>
<path d="M429.0 587.16H1921.0" stroke="rgba(0,138,200,0.225)" stroke-width="1.7" fill="none"/>
<path d="M429.0 588.42H1921.0M429.0 589.07H1921.0M429.0 589.75H1921.0M429.0 591.17H1921.0" stroke="rgba(0,138,200,0.076)" stroke-width="1.4" fill="none"/>
<path d="M429.0 590.45H1921.0" stroke="rgba(0,138,200,0.229)" stroke-width="1.7" fill="none"/>
<path d="M429.0 591.91H1921.0M429.0 592.68H1921.0M429.0 593.48H1921.0" stroke="rgba(0,138,200,0.077)" stroke-width="1.4" fill="none"/>
<path d="M429.0 594.30H1921.0" stroke="rgba(0,138,200,0.232)" stroke-width="1.7" fill="none"/>
<path d="M429.0 595.15H1921.0M429.0 596.03H1921.0M429.0 596.94H1921.0M429.0 597.89H1921.0" stroke="rgba(0,138,200,0.078)" stroke-width="1.4" fill="none"/>
<path d="M429.0 598.87H1921.0" stroke="rgba(0,138,200,0.236)" stroke-width="1.7" fill="none"/>
<path d="M429.0 599.89H1921.0M429.0 600.95H1921.0" stroke="rgba(0,138,200,0.079)" stroke-width="1.4" fill="none"/>
<path d="M429.0 602.05H1921.0M429.0 603.19H1921.0" stroke="rgba(0,138,200,0.08)" stroke-width="1.4" fill="none"/>
<path d="M429.0 604.39H1921.0" stroke="rgba(0,138,200,0.242)" stroke-width="1.7" fill="none"/>
<path d="M429.0 605.63H1921.0M429.0 606.93H1921.0" stroke="rgba(0,138,200,0.081)" stroke-width="1.4" fill="none"/>
<path d="M429.0 608.28H1921.0M429.0 609.70H1921.0" stroke="rgba(0,138,200,0.082)" stroke-width="1.4" fill="none"/>
<path d="M429.0 611.18H1921.0" stroke="rgba(0,138,200,0.248)" stroke-width="1.7" fill="none"/>
<path d="M429.0 612.73H1921.0" stroke="rgba(0,138,200,0.083)" stroke-width="1.4" fill="none"/>
<path d="M429.0 614.35H1921.0M429.0 616.06H1921.0" stroke="rgba(0,138,200,0.084)" stroke-width="1.4" fill="none"/>
<path d="M429.0 617.85H1921.0" stroke="rgba(0,138,200,0.085)" stroke-width="1.4" fill="none"/>
<path d="M429.0 619.74H1921.0" stroke="rgba(0,138,200,0.256)" stroke-width="1.7" fill="none"/>
<path d="M429.0 621.73H1921.0" stroke="rgba(0,138,200,0.086)" stroke-width="1.4" fill="none"/>
<path d="M429.0 623.82H1921.0M429.0 626.04H1921.0" stroke="rgba(0,138,200,0.087)" stroke-width="1.4" fill="none"/>
<path d="M429.0 628.38H1921.0" stroke="rgba(0,138,200,0.088)" stroke-width="1.4" fill="none"/>
<path d="M429.0 630.87H1921.0" stroke="rgba(0,138,200,0.266)" stroke-width="1.7" fill="none"/>
<path d="M429.0 633.51H1921.0M429.0 636.32H1921.0" stroke="rgba(0,138,200,0.09)" stroke-width="1.4" fill="none"/>
<path d="M429.0 639.31H1921.0" stroke="rgba(0,138,200,0.091)" stroke-width="1.4" fill="none"/>
<path d="M429.0 642.50H1921.0" stroke="rgba(0,138,200,0.092)" stroke-width="1.4" fill="none"/>
<path d="M429.0 645.93H1921.0" stroke="rgba(0,138,200,0.28)" stroke-width="1.7" fill="none"/>
<path d="M429.0 649.60H1921.0" stroke="rgba(0,138,200,0.095)" stroke-width="1.4" fill="none"/>
<path d="M429.0 653.55H1921.0" stroke="rgba(0,138,200,0.096)" stroke-width="1.4" fill="none"/>
<path d="M429.0 657.81H1921.0" stroke="rgba(0,138,200,0.097)" stroke-width="1.4" fill="none"/>
<path d="M429.0 662.43H1921.0" stroke="rgba(0,138,200,0.099)" stroke-width="1.4" fill="none"/>
<path d="M429.0 667.44H1921.0M429.0 700.68H1921.0M429.0 886.77H1921.0" stroke="rgba(0,138,200,0.3)" stroke-width="1.7" fill="none"/>
<path d="M429.0 672.89H1921.0M429.0 678.86H1921.0M429.0 685.42H1921.0M429.0 692.65H1921.0M429.0 709.63H1921.0M429.0 719.67H1921.0M429.0 731.02H1921.0M429.0 743.96H1921.0M429.0 776.13H1921.0M429.0 796.47H1921.0M429.0 820.75H1921.0M429.0 850.22H1921.0M429.0 933.28H1921.0" stroke="rgba(0,138,200,0.1)" stroke-width="1.4" fill="none"/>
<path d="M418.3 577.74L414.0 577.9M431.1 577.74L414.0 578.5M444.0 577.74L414.0 579.1M456.8 577.74L414.0 579.7M482.5 577.74L414.0 580.9M495.3 577.74L414.0 581.6M508.1 577.74L414.0 582.3M521.0 577.74L414.0 583.0M546.6 577.74L414.0 584.5M559.5 577.74L414.0 585.3M572.3 577.74L414.0 586.2M585.1 577.74L414.0 587.1M610.8 577.74L414.0 589.0M623.6 577.74L414.0 590.0M636.5 577.74L414.0 591.0M649.3 577.74L414.0 592.1M675.0 577.74L414.0 594.5M687.8 577.74L414.0 595.8M700.6 577.74L414.0 597.2M713.5 577.74L414.0 598.6M739.1 577.74L414.0 601.7M752.0 577.74L414.0 603.4M764.8 577.74L414.0 605.2M777.6 577.74L414.0 607.2M803.3 577.74L414.0 611.4M816.1 577.74L414.0 613.8M829.0 577.74L414.0 616.3M841.8 577.74L414.0 619.0M867.5 577.74L414.0 625.2M880.3 577.74L414.0 628.6M893.2 577.74L414.0 632.4M906.0 577.74L414.0 636.5M931.7 577.74L414.0 646.1M944.5 577.74L414.0 651.7M957.3 577.74L414.0 657.9M970.2 577.74L414.0 665.0M995.8 577.74L414.0 682.0M1008.7 577.74L414.0 692.5M1021.5 577.74L414.0 704.8M1034.3 577.74L414.0 719.2M1060.0 577.74L414.0 757.9M1072.8 577.74L414.0 784.4M1085.7 577.74L414.0 818.5M1098.5 577.74L414.0 864.0M1124.2 577.74L451.1 1000.0M1137.0 577.74L632.2 1000.0M1149.8 577.74L813.3 1000.0M1162.7 577.74L994.4 1000.0M1188.3 577.74L1356.6 1000.0M1201.2 577.74L1537.7 1000.0M1214.0 577.74L1718.8 1000.0M1226.8 577.74L1899.9 1000.0M1252.5 577.74L1936.0 863.6M1265.3 577.74L1936.0 818.2M1278.2 577.74L1936.0 784.1M1291.0 577.74L1936.0 757.6M1316.7 577.74L1936.0 719.0M1329.5 577.74L1936.0 704.6M1342.3 577.74L1936.0 692.3M1355.2 577.74L1936.0 681.8M1380.8 577.74L1936.0 664.8M1393.7 577.74L1936.0 657.8M1406.5 577.74L1936.0 651.6M1419.3 577.74L1936.0 646.0M1445.0 577.74L1936.0 636.4M1457.8 577.74L1936.0 632.3M1470.7 577.74L1936.0 628.5M1483.5 577.74L1936.0 625.0M1509.2 577.74L1936.0 618.9M1522.0 577.74L1936.0 616.2M1534.9 577.74L1936.0 613.7M1547.7 577.74L1936.0 611.3M1573.4 577.74L1936.0 607.1M1586.2 577.74L1936.0 605.2M1599.0 577.74L1936.0 603.4M1611.9 577.74L1936.0 601.7M1637.5 577.74L1936.0 598.5M1650.4 577.74L1936.0 597.1M1663.2 577.74L1936.0 595.8M1676.0 577.74L1936.0 594.5M1701.7 577.74L1936.0 592.1M1714.5 577.74L1936.0 591.0M1727.4 577.74L1936.0 589.9M1740.2 577.74L1936.0 588.9M1765.9 577.74L1936.0 587.0M1778.7 577.74L1936.0 586.1M1791.5 577.74L1936.0 585.3M1804.4 577.74L1936.0 584.5M1830.0 577.74L1936.0 582.9M1842.9 577.74L1936.0 582.2M1855.7 577.74L1936.0 581.5M1868.5 577.74L1936.0 580.9M1894.2 577.74L1936.0 579.6M1907.0 577.74L1936.0 579.0M1919.9 577.74L1936.0 578.4M1932.7 577.74L1936.0 577.9" stroke="url(#gmin)" stroke-width="1.4" fill="none"/>
<path d="M469.6 577.74L414.0 580.3M533.8 577.74L414.0 583.7M598.0 577.74L414.0 588.0M662.1 577.74L414.0 593.3M726.3 577.74L414.0 600.1M790.5 577.74L414.0 609.2M854.7 577.74L414.0 622.0M918.8 577.74L414.0 641.1M983.0 577.74L414.0 672.9M1047.2 577.74L414.0 736.6M1111.3 577.74L414.0 927.7M1239.7 577.74L1936.0 927.2M1303.8 577.74L1936.0 736.4M1368.0 577.74L1936.0 672.8M1432.2 577.74L1936.0 641.0M1496.3 577.74L1936.0 621.9M1560.5 577.74L1936.0 609.1M1624.7 577.74L1936.0 600.1M1688.9 577.74L1936.0 593.2M1753.0 577.74L1936.0 587.9M1817.2 577.74L1936.0 583.7M1881.4 577.74L1936.0 580.2" stroke="url(#gmaj)" stroke-width="1.7" fill="none"/>
<path d="M434 578.14H1916" stroke="rgba(0,138,200,0.32)" stroke-width="2.2"/>
<path d="M434 758.84H1916" stroke="rgba(0,138,200,0.55)" stroke-width="2.4"/>
<path d="M1175.5 577.74V959" stroke="rgba(0,138,200,0.52)" stroke-width="3"/>
<text transform="matrix(3.7 0 -0.15 1 1125.2 904.8)" font-size="19" fill="#0a8ccc" stroke="#0a8ccc" stroke-width="0.55">Z</text>
<text transform="matrix(2.74 0 0.943 0.629 1585.1 765.9)" font-size="12" fill="#0a8ccc" stroke="#0a8ccc" stroke-width="0.3">X</text>
<path d="M852 402L921.2 399L927 411.8L895.6 464.3Z" fill="#000" stroke="#0e9bb4" stroke-width="1.5" stroke-linejoin="round"/>
<path d="M852 402L921.2 399L888.9 453.3Z" fill="#000" stroke="#0e9bb4" stroke-width="2.3" stroke-linejoin="round"/>
<path d="M888.9 453.3L895.6 464.3" stroke="#0e9bb4" stroke-width="2.8"/>
<text transform="translate(892.3 476.4) rotate(-59.5) scale(1 0.55)" font-size="9.5" fill="#8a8a8a" textLength="84" lengthAdjust="spacing">Prime 13 029896</text>
<text transform="translate(906.8 441.8) rotate(-59.5) scale(1.75 0.42)" font-size="20" font-style="italic" fill="#fff">2</text>
<path d="M1169.4 404.3L1134.5 456.3L1135 470.3L1198.6 473.8L1197.6 458.8Z" fill="#000" stroke="#0e9bb4" stroke-width="1.1" stroke-linejoin="round"/>
<path d="M1169.4 404.3L1135 470.3L1198.6 473.8Z" fill="#000" stroke="#0e9bb4" stroke-width="2.3" stroke-linejoin="round"/>
<path d="M1452.3 415.9L1514.2 407.5L1494.6 464.6L1481.4 474.6L1440.7 428.1Z" fill="#000" stroke="#0e9bb4" stroke-width="1.45" stroke-linejoin="round"/>
<path d="M1452.3 415.9L1494.6 464.6" stroke="#0e9bb4" stroke-width="3"/>
<text transform="translate(1487.8 486) rotate(-131.2) scale(1 -0.6)" font-size="9.5" fill="#8a8a8a" textLength="86" lengthAdjust="spacing">Prime 13 039890</text>
<text transform="matrix(-1.7 1.3 1.05 0.62 1472.6 444.6)" font-size="10" fill="#fff">1</text>
<circle cx="1140.5" cy="737.3" r="22.3" fill="#00ff00"/>
<circle cx="1199.7" cy="742.5" r="22.3" fill="#00ff00"/>
<circle cx="1227.2" cy="743.5" r="22.3" fill="#00ff00"/>
<rect x="515.8" y="832" width="4.3" height="44" fill="#00ff00"/><path d="M517.9 814.5L521.8 834.8H514Z" fill="#00ff00"/>
<rect x="518" y="873.9" width="43" height="4.3" fill="#ff0000"/><path d="M579.5 876L559 879.9V872.1Z" fill="#ff0000"/>
<circle cx="517.9" cy="876" r="3.7" fill="#0000ff"/>
</svg>
</div>
<div style="position:absolute;left:434px;top:133px;width:1px;height:826px;background:#0a0a0a;"></div>
<div style="position:absolute;left:1915px;top:133px;width:1px;height:826px;background:#0a0a0a;"></div>
<div style="position:absolute;left:466px;top:144px;width:1px;height:13px;background:#3c3c3c;"></div>
<div style="position:absolute;left:1092.5px;top:142.5px;width:38px;height:20px;background:#1a1a1a;box-sizing:border-box;border:1.5px solid #10bcd4;border-radius:3px;"></div>
<div style="position:absolute;left:1140px;top:142.5px;width:117.5px;height:20px;background:#ff6a00;border-radius:3px;"></div>
<div style="position:absolute;left:4px;top:963.5px;width:1910px;height:1.5px;background:#000000;"></div>
<div style="position:absolute;left:6px;top:965px;width:1908px;height:23px;background:#232323;"></div>
<div style="position:absolute;left:6px;top:988px;width:1909px;height:46.6px;background:#2d2d2d;"></div>
<svg style="left:0;top:0" width="1920" height="1040"><path d="M240.5 966V987" stroke="#686868" stroke-width="1" stroke-dasharray="1 2"/><path d="M473.5 966V987" stroke="#686868" stroke-width="1" stroke-dasharray="1 2"/><path d="M705.5 966V987" stroke="#686868" stroke-width="1" stroke-dasharray="1 2"/><path d="M938.5 966V987" stroke="#686868" stroke-width="1" stroke-dasharray="1 2"/><path d="M1171.5 966V987" stroke="#686868" stroke-width="1" stroke-dasharray="1 2"/><path d="M1403.5 966V987" stroke="#686868" stroke-width="1" stroke-dasharray="1 2"/><path d="M1636.5 966V987" stroke="#686868" stroke-width="1" stroke-dasharray="1 2"/><path d="M1868.5 966V987" stroke="#686868" stroke-width="1" stroke-dasharray="1 2"/><path d="M7 978.5H1914" stroke="#14a80a" stroke-width="1.5"/><path d="M7.5 975V982.5M1913.5 975V982.5" stroke="#14a80a" stroke-width="1.2"/><rect x="318.7" y="965" width="1.3" height="23" fill="#ffffff"/><rect x="604.7" y="1004.9" width="3.4" height="13" fill="#ffffff"/><path d="M619 1004.9V1017.9L608.1 1011.4ZM630.2 1004.9V1017.9L619 1011.4Z" fill="#ffffff"/><rect x="645.8" y="1004.9" width="3.3" height="13" fill="#ffffff"/><path d="M660.2 1004.9V1017.9L649 1011.4Z" fill="#ffffff"/><rect x="676.7" y="998.9" width="7.4" height="25" fill="#ffffff"/><rect x="690.9" y="998.9" width="7.4" height="25" fill="#ffffff"/><rect x="726.9" y="1004.9" width="3.3" height="13" fill="#ffffff"/><path d="M715.8 1004.9V1017.9L727 1011.4Z" fill="#ffffff"/><rect x="767" y="1004.9" width="3.3" height="13" fill="#ffffff"/><path d="M744.8 1004.9V1017.9L756 1011.4ZM755.9 1004.9V1017.9L767.1 1011.4Z" fill="#ffffff"/><path d="M1387.3 1004.4H1389.6L1390.5 1009V1016.9H1384V1012.5Z" fill="#8e8e8e"/><path d="M1395.7 1004.4H1393.5L1392.7 1009V1016.9H1399.3V1012.5Z" fill="#8e8e8e"/><rect x="1390.4" y="1007" width="2.5" height="4.6" fill="#8e8e8e"/><rect x="1384" y="1018" width="6.5" height="1" fill="#8e8e8e"/><rect x="1392.7" y="1018" width="6.6" height="1" fill="#8e8e8e"/><path d="M1868.8 1009.2L1871.6 1006.3L1874.4 1009.2M1868.8 1014.2L1871.6 1017.1L1874.4 1014.2" fill="none" stroke="#767676" stroke-width="1.2"/><path d="M1893.8 1004.4Q1888.9 1005.4 1888.9 1011V1014.2L1886.9 1016.6V1017.4H1900.8V1016.6L1898.8 1014.2V1011Q1898.8 1005.4 1893.8 1004.4Z" fill="#e6e6e6"/><path d="M1892 1018.3H1895.7Q1895.5 1019.9 1893.85 1019.9Q1892.2 1019.9 1892 1018.3Z" fill="#e6e6e6"/><circle cx="1898.6" cy="1006.9" r="3.1" fill="#e6001e"/></svg>
<div style="position:absolute;left:21px;top:1000px;width:100px;height:22px;background:transparent;box-sizing:border-box;border:1px solid #02e6fc;border-radius:3px;"></div>
<div style="position:absolute;left:71px;top:1000px;width:50px;height:22px;background:#02e6fc;border-radius:0 3px 3px 0;"></div>
<div style="position:absolute;left:1241.5px;top:1001.5px;width:64.5px;height:21px;background:#000000;border-radius:3px;"></div>
<div style="position:absolute;left:1290.5px;top:1003px;width:14.5px;height:18px;background:#3a3a3a;border-radius:0 2px 2px 0;"></div>
<svg style="left:1293.5px;top:1010px" width="9" height="6"><path d="M0.8 1L4.4 4.4L8 1" fill="none" stroke="#c4c4c4" stroke-width="1.1"/></svg>
<div style="position:absolute;left:1319px;top:1002px;width:55px;height:20px;background:#262626;border-radius:2px;"></div>
<div style="position:absolute;left:1409.7px;top:1002px;width:55.5px;height:20px;background:#262626;border-radius:2px;"></div>
<div style="position:absolute;left:23.28px;top:1.80px;height:20px;line-height:20px;font-size:12px;color:#ffffff;white-space:pre;transform:scaleX(0.9580);transform-origin:0 0;">Motive:Tracker 2.2.0 Final</div>
<div style="position:absolute;left:9.35px;top:25.79px;height:20px;line-height:20px;font-size:10.6px;color:#f0f0f0;white-space:pre;transform:scaleX(0.9403);transform-origin:0 0;">File</div>
<div style="position:absolute;left:41.30px;top:25.79px;height:20px;line-height:20px;font-size:10.6px;color:#f0f0f0;white-space:pre;transform:scaleX(1.0434);transform-origin:0 0;">Edit</div>
<div style="position:absolute;left:75.63px;top:25.79px;height:20px;line-height:20px;font-size:10.6px;color:#f0f0f0;white-space:pre;transform:scaleX(0.9771);transform-origin:0 0;">View</div>
<div style="position:absolute;left:113.29px;top:25.79px;height:20px;line-height:20px;font-size:10.6px;color:#f0f0f0;white-space:pre;transform:scaleX(1.0706);transform-origin:0 0;">Layout</div>
<div style="position:absolute;left:162.82px;top:25.79px;height:20px;line-height:20px;font-size:10.6px;color:#f0f0f0;white-space:pre;transform:scaleX(1.0131);transform-origin:0 0;">Tools</div>
<div style="position:absolute;left:203.32px;top:25.79px;height:20px;line-height:20px;font-size:10.6px;color:#f0f0f0;white-space:pre;transform:scaleX(0.9996);transform-origin:0 0;">Community</div>
<div style="position:absolute;left:271.82px;top:25.79px;height:20px;line-height:20px;font-size:10.6px;color:#f0f0f0;white-space:pre;transform:scaleX(1.0120);transform-origin:0 0;">Help</div>
<div style="position:absolute;left:1680.02px;top:25.94px;height:20px;line-height:20px;font-size:11px;color:#f0f0f0;white-space:pre;transform:scaleX(0.9651);transform-origin:0 0;">Recording</div>
<div style="position:absolute;left:0;top:0;width:1920px;height:1040px;filter:brightness(1);pointer-events:none"><div style="position:absolute;left:11.70px;top:83.80px;height:20px;line-height:20px;font-size:12px;color:#dcdcdc;white-space:pre;transform:scaleX(0.9295);transform-origin:0 0;">Data</div>
<div style="position:absolute;left:15.90px;top:109.01px;height:20px;line-height:20px;font-size:14px;color:#ffffff;white-space:pre;transform:scaleX(0.9587);transform-origin:0 0;">Session 2020-09-16</div>
<div style="position:absolute;left:359.43px;top:108.51px;height:20px;line-height:20px;font-size:14px;color:#8c8c8c;white-space:pre;transform:scaleX(0.9027);transform-origin:0 0;">Simple</div>
<div style="position:absolute;left:83.92px;top:133.01px;height:20px;line-height:20px;font-size:14px;color:#12d7ee;white-space:pre;transform:scaleX(0.9137);transform-origin:0 0;">Name</div>
<div style="position:absolute;left:90.83px;top:160.21px;height:20px;line-height:20px;font-size:14px;color:#a8a8a8;white-space:pre;transform:scaleX(0.8983);transform-origin:0 0;">Calibration Ground Plane</div>
<div style="position:absolute;left:90.83px;top:185.21px;height:20px;line-height:20px;font-size:14px;color:#a8a8a8;white-space:pre;transform:scaleX(0.9064);transform-origin:0 0;">Calibration Ground Plane_001</div>
<div style="position:absolute;left:90.82px;top:210.21px;height:20px;line-height:20px;font-size:14px;color:#a8a8a8;white-space:pre;transform:scaleX(0.9273);transform-origin:0 0;">Calibration Wanding 2020-09-16 0···</div>
<div style="position:absolute;left:90.82px;top:235.21px;height:20px;line-height:20px;font-size:14px;color:#a8a8a8;white-space:pre;transform:scaleX(0.9273);transform-origin:0 0;">Calibration Wanding 2020-09-16 0···</div>
<div style="position:absolute;left:90.82px;top:260.21px;height:20px;line-height:20px;font-size:14px;color:#a8a8a8;white-space:pre;transform:scaleX(0.9273);transform-origin:0 0;">Calibration Wanding 2020-09-16 0···</div>
<div style="position:absolute;left:90.82px;top:285.21px;height:20px;line-height:20px;font-size:14px;color:#a8a8a8;white-space:pre;transform:scaleX(0.9273);transform-origin:0 0;">Calibration Wanding 2020-10-28 0···</div>
<div style="position:absolute;left:90.81px;top:310.21px;height:20px;line-height:20px;font-size:14px;color:#a8a8a8;white-space:pre;transform:scaleX(0.9315);transform-origin:0 0;">Calibration Wanding 2020-11-17 0···</div>
<div style="position:absolute;left:90.78px;top:335.21px;height:20px;line-height:20px;font-size:14px;color:#a8a8a8;white-space:pre;transform:scaleX(0.9781);transform-origin:0 0;">Take 2020-09-16 03.40.05 PM</div>
<div style="position:absolute;left:90.79px;top:360.21px;height:20px;line-height:20px;font-size:14px;color:#a8a8a8;white-space:pre;transform:scaleX(0.9737);transform-origin:0 0;">Take 2020-09-16 03.40.05 PM_001</div>
<div style="position:absolute;left:90.78px;top:385.21px;height:20px;line-height:20px;font-size:14px;color:#a8a8a8;white-space:pre;transform:scaleX(0.9875);transform-origin:0 0;">Take 2020-12-16 10.32.21 AM</div>
<div style="position:absolute;left:90.78px;top:410.21px;height:20px;line-height:20px;font-size:14px;color:#a8a8a8;white-space:pre;transform:scaleX(0.9875);transform-origin:0 0;">Take 2020-12-16 10.35.51 AM</div>
<div style="position:absolute;left:90.78px;top:435.21px;height:20px;line-height:20px;font-size:14px;color:#ffffff;white-space:pre;transform:scaleX(0.9875);transform-origin:0 0;">Take 2020-12-16 10.36.00 AM</div>
<div style="position:absolute;left:145.89px;top:486.01px;height:20px;line-height:20px;font-size:14px;color:#a8a8a8;white-space:pre;transform:scaleX(0.9662);transform-origin:0 0;">12 items</div>
<div style="position:absolute;left:10.47px;top:519.30px;height:20px;line-height:20px;font-size:12px;color:#dcdcdc;white-space:pre;transform:scaleX(0.9762);transform-origin:0 0;">Properties (1)</div>
<div style="position:absolute;left:18.41px;top:580.01px;height:20px;line-height:20px;font-size:14px;color:#ffffff;white-space:pre;transform:scaleX(0.9362);transform-origin:0 0;-webkit-text-stroke:0.45px #fff;">General</div>
<div style="position:absolute;left:141.42px;top:612.31px;height:20px;line-height:20px;font-size:14px;color:#a8a8a8;white-space:pre;transform:scaleX(0.9200);transform-origin:0 0;">Name:</div>
<div style="position:absolute;left:182.39px;top:612.31px;height:20px;line-height:20px;font-size:14px;color:#a8a8a8;white-space:pre;transform:scaleX(0.9691);transform-origin:0 0;">Take 2020-12-16 10.36....</div>
<div style="position:absolute;left:111.45px;top:634.31px;height:20px;line-height:20px;font-size:14px;color:#a8a8a8;white-space:pre;transform:scaleX(0.8730);transform-origin:0 0;">Frame Rate:</div>
<div style="position:absolute;left:182.34px;top:634.31px;height:20px;line-height:20px;font-size:14px;color:#a8a8a8;white-space:pre;transform:scaleX(1.0546);transform-origin:0 0;">100</div>
<div style="position:absolute;left:109.43px;top:656.31px;height:20px;line-height:20px;font-size:14px;color:#a8a8a8;white-space:pre;transform:scaleX(0.8989);transform-origin:0 0;">Start Frame:</div>
<div style="position:absolute;left:182.30px;top:656.31px;height:20px;line-height:20px;font-size:14px;color:#a8a8a8;white-space:pre;transform:scaleX(1.1074);transform-origin:0 0;">0</div>
<div style="position:absolute;left:115.45px;top:678.31px;height:20px;line-height:20px;font-size:14px;color:#a8a8a8;white-space:pre;transform:scaleX(0.8741);transform-origin:0 0;">End Frame:</div>
<div style="position:absolute;left:182.35px;top:678.31px;height:20px;line-height:20px;font-size:14px;color:#a8a8a8;white-space:pre;transform:scaleX(1.0314);transform-origin:0 0;">2047</div>
<div style="position:absolute;left:136.41px;top:700.31px;height:20px;line-height:20px;font-size:14px;color:#a8a8a8;white-space:pre;transform:scaleX(0.9353);transform-origin:0 0;">Assets:</div>
<div style="position:absolute;left:140.90px;top:722.31px;height:20px;line-height:20px;font-size:14px;color:#a8a8a8;white-space:pre;transform:scaleX(0.9497);transform-origin:0 0;">Notes:</div>
<div style="position:absolute;left:149.41px;top:800.31px;height:20px;line-height:20px;font-size:14px;color:#a8a8a8;white-space:pre;transform:scaleX(0.9382);transform-origin:0 0;">Best:</div>
<div style="position:absolute;left:63.40px;top:825.01px;height:20px;line-height:20px;font-size:14px;color:#a8a8a8;white-space:pre;transform:scaleX(0.9531);transform-origin:0 0;">Capture Date/Time:</div>
<div style="position:absolute;left:182.35px;top:825.01px;height:20px;line-height:20px;font-size:14px;color:#a8a8a8;white-space:pre;transform:scaleX(1.0375);transform-origin:0 0;">12/16/2020  10:36 AM</div>
<div style="position:absolute;left:63.42px;top:847.01px;height:20px;line-height:20px;font-size:14px;color:#a8a8a8;white-space:pre;transform:scaleX(0.9139);transform-origin:0 0;">Captured in Version:</div>
<div style="position:absolute;left:182.38px;top:847.01px;height:20px;line-height:20px;font-size:14px;color:#a8a8a8;white-space:pre;transform:scaleX(0.9837);transform-origin:0 0;">2.2.0</div>
<div style="position:absolute;left:78.43px;top:869.01px;height:20px;line-height:20px;font-size:14px;color:#a8a8a8;white-space:pre;transform:scaleX(0.9069);transform-origin:0 0;">Captured in Build:</div>
<div style="position:absolute;left:182.35px;top:869.01px;height:20px;line-height:20px;font-size:14px;color:#a8a8a8;white-space:pre;transform:scaleX(1.0307);transform-origin:0 0;">48012</div>
<div style="position:absolute;left:124.42px;top:891.01px;height:20px;line-height:20px;font-size:14px;color:#a8a8a8;white-space:pre;transform:scaleX(0.9168);transform-origin:0 0;">Progress:</div>
<div style="position:absolute;left:353.39px;top:636.31px;height:20px;line-height:20px;font-size:14px;color:#a8a8a8;white-space:pre;transform:scaleX(0.9713);transform-origin:0 0;">Hz</div>
<div style="position:absolute;left:215.64px;top:800.51px;height:20px;line-height:20px;font-size:14px;color:#ffffff;white-space:pre;transform:scaleX(1.0495);transform-origin:0 0;">Off</div>
<div style="position:absolute;left:183.73px;top:891.01px;height:20px;line-height:20px;font-size:14px;color:#ffffff;white-space:pre;transform:scaleX(0.9033);transform-origin:0 0;">Recorded</div>
<div style="position:absolute;left:18.92px;top:931.01px;height:20px;line-height:20px;font-size:14px;color:#ffffff;white-space:pre;transform:scaleX(0.9139);transform-origin:0 0;-webkit-text-stroke:0.45px #fff;">Reconstruction Settings</div>
<div style="position:absolute;left:441.98px;top:82.80px;height:20px;line-height:20px;font-size:12px;color:#dcdcdc;white-space:pre;transform:scaleX(0.9635);transform-origin:0 0;">Perspective View</div>
<div style="position:absolute;left:443.92px;top:140.78px;height:20px;line-height:20px;font-size:12.5px;color:#3a3a3a;white-space:pre;transform:scaleX(1.0330);transform-origin:0 0;font-weight:700;">2D</div>
<div style="position:absolute;left:473.05px;top:140.78px;height:20px;line-height:20px;font-size:12.5px;color:#ffffff;white-space:pre;transform:scaleX(0.9830);transform-origin:0 0;font-weight:700;">3D</div>
<div style="position:absolute;left:1099.52px;top:142.56px;height:20px;line-height:20px;font-size:10.5px;color:#14d0ea;white-space:pre;transform:scaleX(1.0179);transform-origin:0 0;font-weight:700;">EDIT</div>
<div style="position:absolute;left:1152.03px;top:142.56px;height:20px;line-height:20px;font-size:10.5px;color:#5a2a0a;white-space:pre;transform:scaleX(0.9844);transform-origin:0 0;font-weight:700;">PASSIVE + ACTIVE</div>
<div style="position:absolute;left:1825.40px;top:901.01px;height:20px;line-height:20px;font-size:14px;color:#f0f0f0;white-space:pre;transform:scaleX(0.9582);transform-origin:0 0;">3 Markers</div>
<div style="position:absolute;left:1824.42px;top:926.01px;height:20px;line-height:20px;font-size:14px;color:#f0f0f0;white-space:pre;transform:scaleX(0.9239);transform-origin:0 0;">0 Selected</div>
<div style="position:absolute;left:217.52px;top:960.24px;height:20px;line-height:20px;font-size:11px;color:#c8c8c8;white-space:pre;transform:scaleX(0.9745);transform-origin:0 0;">250</div>
<div style="position:absolute;left:450.12px;top:960.24px;height:20px;line-height:20px;font-size:11px;color:#c8c8c8;white-space:pre;transform:scaleX(0.9745);transform-origin:0 0;">500</div>
<div style="position:absolute;left:682.72px;top:960.24px;height:20px;line-height:20px;font-size:11px;color:#c8c8c8;white-space:pre;transform:scaleX(0.9745);transform-origin:0 0;">750</div>
<div style="position:absolute;left:908.81px;top:960.24px;height:20px;line-height:20px;font-size:11px;color:#c8c8c8;white-space:pre;transform:scaleX(0.9962);transform-origin:0 0;">1000</div>
<div style="position:absolute;left:1141.41px;top:960.24px;height:20px;line-height:20px;font-size:11px;color:#c8c8c8;white-space:pre;transform:scaleX(0.9962);transform-origin:0 0;">1250</div>
<div style="position:absolute;left:1374.01px;top:960.24px;height:20px;line-height:20px;font-size:11px;color:#c8c8c8;white-space:pre;transform:scaleX(0.9962);transform-origin:0 0;">1500</div>
<div style="position:absolute;left:1606.61px;top:960.24px;height:20px;line-height:20px;font-size:11px;color:#c8c8c8;white-space:pre;transform:scaleX(0.9962);transform-origin:0 0;">1750</div>
<div style="position:absolute;left:1839.21px;top:960.24px;height:20px;line-height:20px;font-size:11px;color:#c8c8c8;white-space:pre;transform:scaleX(0.9962);transform-origin:0 0;">2000</div>
<div style="position:absolute;left:34.04px;top:1001.06px;height:20px;line-height:20px;font-size:10.5px;color:#02e6fc;white-space:pre;transform:scaleX(0.9818);transform-origin:0 0;">LIVE</div>
<div style="position:absolute;left:84.04px;top:1001.06px;height:20px;line-height:20px;font-size:10.5px;color:#1c2c3c;white-space:pre;transform:scaleX(0.9636);transform-origin:0 0;-webkit-text-stroke:0.35px #1c2c3c;">EDIT</div>
<div style="position:absolute;left:301.43px;top:1001.01px;height:20px;line-height:20px;font-size:14px;color:#8c8c8c;white-space:pre;transform:scaleX(0.9121);transform-origin:0 0;">Take Name:</div>
<div style="position:absolute;left:389.38px;top:1001.01px;height:20px;line-height:20px;font-size:14px;color:#ffffff;white-space:pre;transform:scaleX(0.9896);transform-origin:0 0;">Take 2020-12-16 10.36.00 AM</div>
<div style="position:absolute;left:833.72px;top:1002.64px;height:20px;line-height:20px;font-size:30px;color:#ffffff;white-space:pre;transform:scaleX(0.9472);transform-origin:0 0;height:40px;line-height:40px;margin-top:-10px;-webkit-text-stroke:0.4px #2d2d2d;">00:00:03:034</div>
<div style="position:absolute;left:1020.39px;top:1002.64px;height:20px;line-height:20px;font-size:30px;color:#ffffff;white-space:pre;transform:scaleX(0.9697);transform-origin:0 0;height:40px;line-height:40px;margin-top:-10px;-webkit-text-stroke:0.4px #2d2d2d;">0334</div>
<div style="position:absolute;left:1119.00px;top:1002.06px;height:20px;line-height:20px;font-size:10.5px;color:#ffffff;white-space:pre;transform:scaleX(1.0570);transform-origin:0 0;">LOOP</div>
<div style="position:absolute;left:1173.07px;top:1002.06px;height:20px;line-height:20px;font-size:10.5px;color:#8c8c8c;white-space:pre;transform:scaleX(0.9136);transform-origin:0 0;">REVERSE</div>
<div style="position:absolute;left:1248.08px;top:1002.31px;height:20px;line-height:20px;font-size:14px;color:#ffffff;white-space:pre;transform:scaleX(0.9894);transform-origin:0 0;">100%</div>
<div style="position:absolute;left:1341.34px;top:1002.31px;height:20px;line-height:20px;font-size:14px;color:#e6e6e6;white-space:pre;transform:scaleX(1.0432);transform-origin:0 0;">0</div>
<div style="position:absolute;left:1420.54px;top:1002.31px;height:20px;line-height:20px;font-size:14px;color:#e6e6e6;white-space:pre;transform:scaleX(1.0410);transform-origin:0 0;">2047</div>
<div style="position:absolute;left:1694.05px;top:1001.51px;height:20px;line-height:20px;font-size:14px;color:#8c8c8c;white-space:pre;transform:scaleX(0.8688);transform-origin:0 0;">Residual</div>
<div style="position:absolute;left:1806.39px;top:1001.51px;height:20px;line-height:20px;font-size:14px;color:#e6e6e6;white-space:pre;transform:scaleX(0.9682);transform-origin:0 0;">0.00 mm</div>
</div>

</body></html>
